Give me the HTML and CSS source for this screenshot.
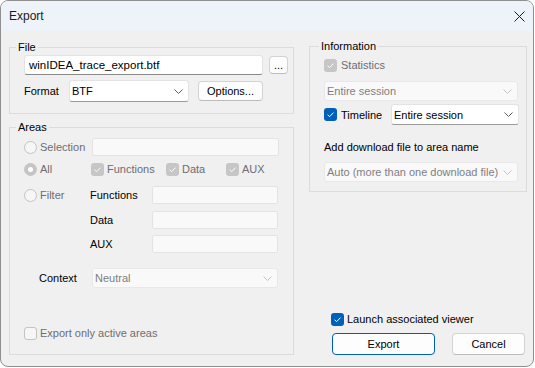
FILE: index.html
```html
<!DOCTYPE html>
<html>
<head>
<meta charset="utf-8">
<title>Export</title>
<link rel="stylesheet" href="styles.css">
</head>
<body>
<div class="window">
  <div class="titlebar">
    <span class="title">Export</span>
    <svg class="close" width="11" height="11" viewBox="0 0 11 11"><path d="M0.5 0.5 L10.5 10.5 M10.5 0.5 L0.5 10.5" stroke="#1b1b1b" stroke-width="1" fill="none"/></svg>
  </div>
  <div class="body">
    <div class="col-left">
      <div class="group file-group">
        <div class="group-title">File</div>
        <div class="row file-row">
          <input class="text-input" type="text" value="winIDEA_trace_export.btf">
          <button class="btn dots-btn">...</button>
        </div>
        <div class="row format-row">
          <span class="format-label">Format</span>
          <div class="combo combo-format"><span>BTF</span><svg width="9" height="5" viewBox="0 0 9 5"><path d="M0.5 0.5 L4.5 4.5 L8.5 0.5" stroke="#5f5f5f" fill="none"/></svg></div>
          <button class="btn options-btn">Options...</button>
        </div>
      </div>
      <div class="group areas-group">
        <div class="group-title">Areas</div>
        <div class="arow arow-sel">
          <span class="opt opt-sel"><span class="radio"></span><span class="dis">Selection</span></span>
          <div class="field field-sel"></div>
        </div>
        <div class="arow arow-all">
          <span class="opt opt-all"><span class="radio on"></span><span class="dis">All</span></span>
          <span class="chk chk-func"><span class="cb dis-on"><svg width="13" height="13" viewBox="0 0 13 13"><path d="M3.6 6.7 L5.6 8.7 L9.5 4.6" stroke="#fff" fill="none" stroke-width="1"/></svg></span><span class="dis">Functions</span></span>
          <span class="chk chk-data"><span class="cb dis-on"><svg width="13" height="13" viewBox="0 0 13 13"><path d="M3.6 6.7 L5.6 8.7 L9.5 4.6" stroke="#fff" fill="none" stroke-width="1"/></svg></span><span class="dis">Data</span></span>
          <span class="chk"><span class="cb dis-on"><svg width="13" height="13" viewBox="0 0 13 13"><path d="M3.6 6.7 L5.6 8.7 L9.5 4.6" stroke="#fff" fill="none" stroke-width="1"/></svg></span><span class="dis">AUX</span></span>
        </div>
        <div class="arow arow-filter">
          <span class="opt opt-filter"><span class="radio"></span><span class="dis">Filter</span></span>
          <span class="flabel">Functions</span>
          <div class="field field-f"></div>
        </div>
        <div class="arow arow-sub arow-data">
          <span class="flabel">Data</span>
          <div class="field field-f"></div>
        </div>
        <div class="arow arow-sub arow-aux">
          <span class="flabel">AUX</span>
          <div class="field field-f"></div>
        </div>
        <div class="arow arow-context">
          <span class="context-label">Context</span>
          <div class="combo combo-dis combo-context"><span>Neutral</span><svg width="9" height="5" viewBox="0 0 9 5"><path d="M0.5 0.5 L4.5 4.5 L8.5 0.5" stroke="#c4c4c4" fill="none"/></svg></div>
        </div>
        <div class="spacer"></div>
        <div class="crow">
          <span class="cb dis-off"></span><span class="dis">Export only active areas</span>
        </div>
      </div>
    </div>
    <div class="col-right">
      <div class="group info-group">
        <div class="group-title">Information</div>
        <div class="crow stat-row">
          <span class="cb dis-on"><svg width="13" height="13" viewBox="0 0 13 13"><path d="M3.6 6.7 L5.6 8.7 L9.5 4.6" stroke="#fff" fill="none" stroke-width="1"/></svg></span><span class="dis">Statistics</span>
        </div>
        <div class="combo combo-dis combo-stat"><span>Entire session</span><svg width="9" height="5" viewBox="0 0 9 5"><path d="M0.5 0.5 L4.5 4.5 L8.5 0.5" stroke="#c4c4c4" fill="none"/></svg></div>
        <div class="timeline-row">
          <span class="crow timeline-chk"><span class="cb on"><svg width="13" height="13" viewBox="0 0 13 13"><path d="M3.6 6.7 L5.6 8.7 L9.5 4.6" stroke="#fff" fill="none" stroke-width="1"/></svg></span><span>Timeline</span></span>
          <div class="combo combo-timeline"><span>Entire session</span><svg width="9" height="5" viewBox="0 0 9 5"><path d="M0.5 0.5 L4.5 4.5 L8.5 0.5" stroke="#5f5f5f" fill="none"/></svg></div>
        </div>
        <div class="add-label">Add download file to area name</div>
        <div class="combo combo-dis combo-auto"><span>Auto (more than one download file)</span><svg width="9" height="5" viewBox="0 0 9 5"><path d="M0.5 0.5 L4.5 4.5 L8.5 0.5" stroke="#c4c4c4" fill="none"/></svg></div>
      </div>
      <div class="spacer"></div>
      <div class="crow launch-row">
        <span class="cb on"><svg width="13" height="13" viewBox="0 0 13 13"><path d="M3.6 6.7 L5.6 8.7 L9.5 4.6" stroke="#fff" fill="none" stroke-width="1"/></svg></span><span>Launch associated viewer</span>
      </div>
      <div class="buttons">
        <button class="btn btn-default">Export</button>
        <button class="btn btn-cancel">Cancel</button>
      </div>
    </div>
  </div>
</div>
</body>
</html>
```
FILE: styles.css
```css
* { box-sizing: border-box; }
html, body { margin: 0; padding: 0; background: #ffffff; }
body {
  font-family: "Liberation Sans", Arial, sans-serif;
  font-size: 11px;
  color: #000;
}
.window {
  width: 534px;
  height: 367px;
  border: 1px solid #8f8f8f;
  border-radius: 8px;
  background: #f0f0f0;
  display: flex;
  flex-direction: column;
  overflow: hidden;
}
.titlebar {
  height: 30px;
  flex-shrink: 0;
  background: #eef3f9;
  display: flex;
  align-items: center;
  justify-content: space-between;
  padding: 0 8px 0 8px;
  font-size: 12px;
  color: #1b1b1b;
}
.body {
  flex: 1;
  display: flex;
  gap: 15px;
  padding: 16px 0 11px 8px;
}
.col-left { width: 285px; display: flex; flex-direction: column; }
.col-right { width: 218px; display: flex; flex-direction: column; }
.group {
  border: 1px solid #dcdcdc;
  padding: 0 14px;
}
.group-title {
  margin: -9px 0 0 -8px;
  padding: 0 2px;
  line-height: 16px;
  background: #f0f0f0;
  width: max-content;
}
.row { display: flex; align-items: center; }
.row > * { flex-shrink: 0; }
.dis { color: #6d6d72; }
.btn {
  font: inherit;
  color: #000;
  background: #fdfdfd;
  border: 1px solid #d3d3d3;
  border-bottom-color: #bcbcbc;
  border-radius: 4px;
  padding: 0;
}
/* File group */
.file-group { padding: 0 6px 11px 14px; }
.file-row { height: 20px; gap: 6px; }
.text-input {
  width: 239px;
  height: 20px;
  font: inherit;
  font-size: 11.5px;
  color: #000;
  background: #fff;
  border: 1px solid #e3e3e3;
  border-bottom-color: #8a8a8a;
  border-radius: 3px;
  padding: 0 4px;
  outline: none;
}
.dots-btn { width: 19px; height: 18px; line-height: 12px; }
.format-row { margin-top: 5px; height: 22px; }
.format-label { width: 45px; }
.combo {
  display: flex;
  align-items: center;
  justify-content: space-between;
  flex-shrink: 0;
  background: #fff;
  border: 1px solid #e3e3e3;
  border-bottom-color: #9a9a9a;
  border-radius: 3px;
  padding: 0 5px 0 2px;
}
.combo-dis {
  background: #f9f9f9;
  border-color: #e8e8e8;
  color: #7e7e82;
}
.combo-format { width: 120px; height: 22px; }
.options-btn { margin-left: 9px; width: 65px; height: 20px; }
/* Areas group */
.areas-group {
  margin-top: 13px;
  flex: 1;
  display: flex;
  flex-direction: column;
  padding-bottom: 12px;
}
.arow { display: flex; align-items: center; height: 20px; }
.arow > * { flex-shrink: 0; }
.arow-sel { margin-top: 2px; }
.arow-all { margin-top: 2px; }
.arow-filter { margin-top: 6px; }
.arow-data { margin-top: 5px; }
.arow-aux { margin-top: 4px; }
.arow-sub { padding-left: 66px; }
.arow-context { margin-top: 14px; }
.opt { display: flex; align-items: center; gap: 3px; }
.opt-sel { width: 68px; }
.opt-all { width: 67px; }
.opt-filter { width: 66px; }
.radio {
  width: 13px;
  height: 13px;
  border-radius: 50%;
  border: 1px solid #c3c3c3;
  background: #f6f6f6;
  flex-shrink: 0;
  display: flex;
  align-items: center;
  justify-content: center;
}
.radio.on { background: #c5c5c5; border-color: #c5c5c5; }
.radio.on::after {
  content: "";
  width: 5px;
  height: 5px;
  border-radius: 50%;
  background: #fff;
}
.field {
  height: 18px;
  background: #f9f9f9;
  border: 1px solid #e3e3e3;
  border-radius: 2px;
}
.field-sel { width: 187px; }
.field-f { width: 126px; }
.flabel { width: 62px; }
.chk { display: flex; align-items: center; gap: 3px; }
.chk-func { width: 75px; }
.chk-data { width: 60px; }
.cb {
  width: 13px;
  height: 13px;
  border-radius: 3px;
  flex-shrink: 0;
  display: flex;
  align-items: center;
  justify-content: center;
}
.cb svg { display: block; }
.cb.dis-on { background: #c6c6c6; }
.cb.on { background: #005fb8; }
.cb.dis-off { background: #f6f6f6; border: 1px solid #c3c3c3; }
.context-label { width: 68px; padding-left: 15px; }
.combo-context { width: 186px; height: 20px; }
.spacer { flex: 1; }
.crow { display: flex; align-items: center; gap: 3px; height: 18px; }
/* Information */
.info-group { margin-top: -1px; padding: 0 7px 9px 14px; }
.info-group .group-title { margin-left: -5px; }
.stat-row { margin-top: 2px; gap: 4px; }
.combo-stat { margin-top: 7px; width: 194px; height: 20px; }
.timeline-row { margin-top: 3px; display: flex; align-items: center; height: 21px; }
.timeline-chk { width: 67px; gap: 4px; flex-shrink: 0; }
.combo-timeline { width: 128px; height: 21px; }
.add-label { margin-top: 14px; line-height: 16px; }
.combo-auto { margin-top: 7px; width: 194px; height: 20px; }
.launch-row { padding-left: 22px; }
.buttons { margin-top: 5px; padding-left: 23px; display: flex; gap: 17px; }
.btn-default { width: 103px; height: 22px; border-color: #005fb8; }
.btn-cancel { width: 73px; height: 22px; }
```
